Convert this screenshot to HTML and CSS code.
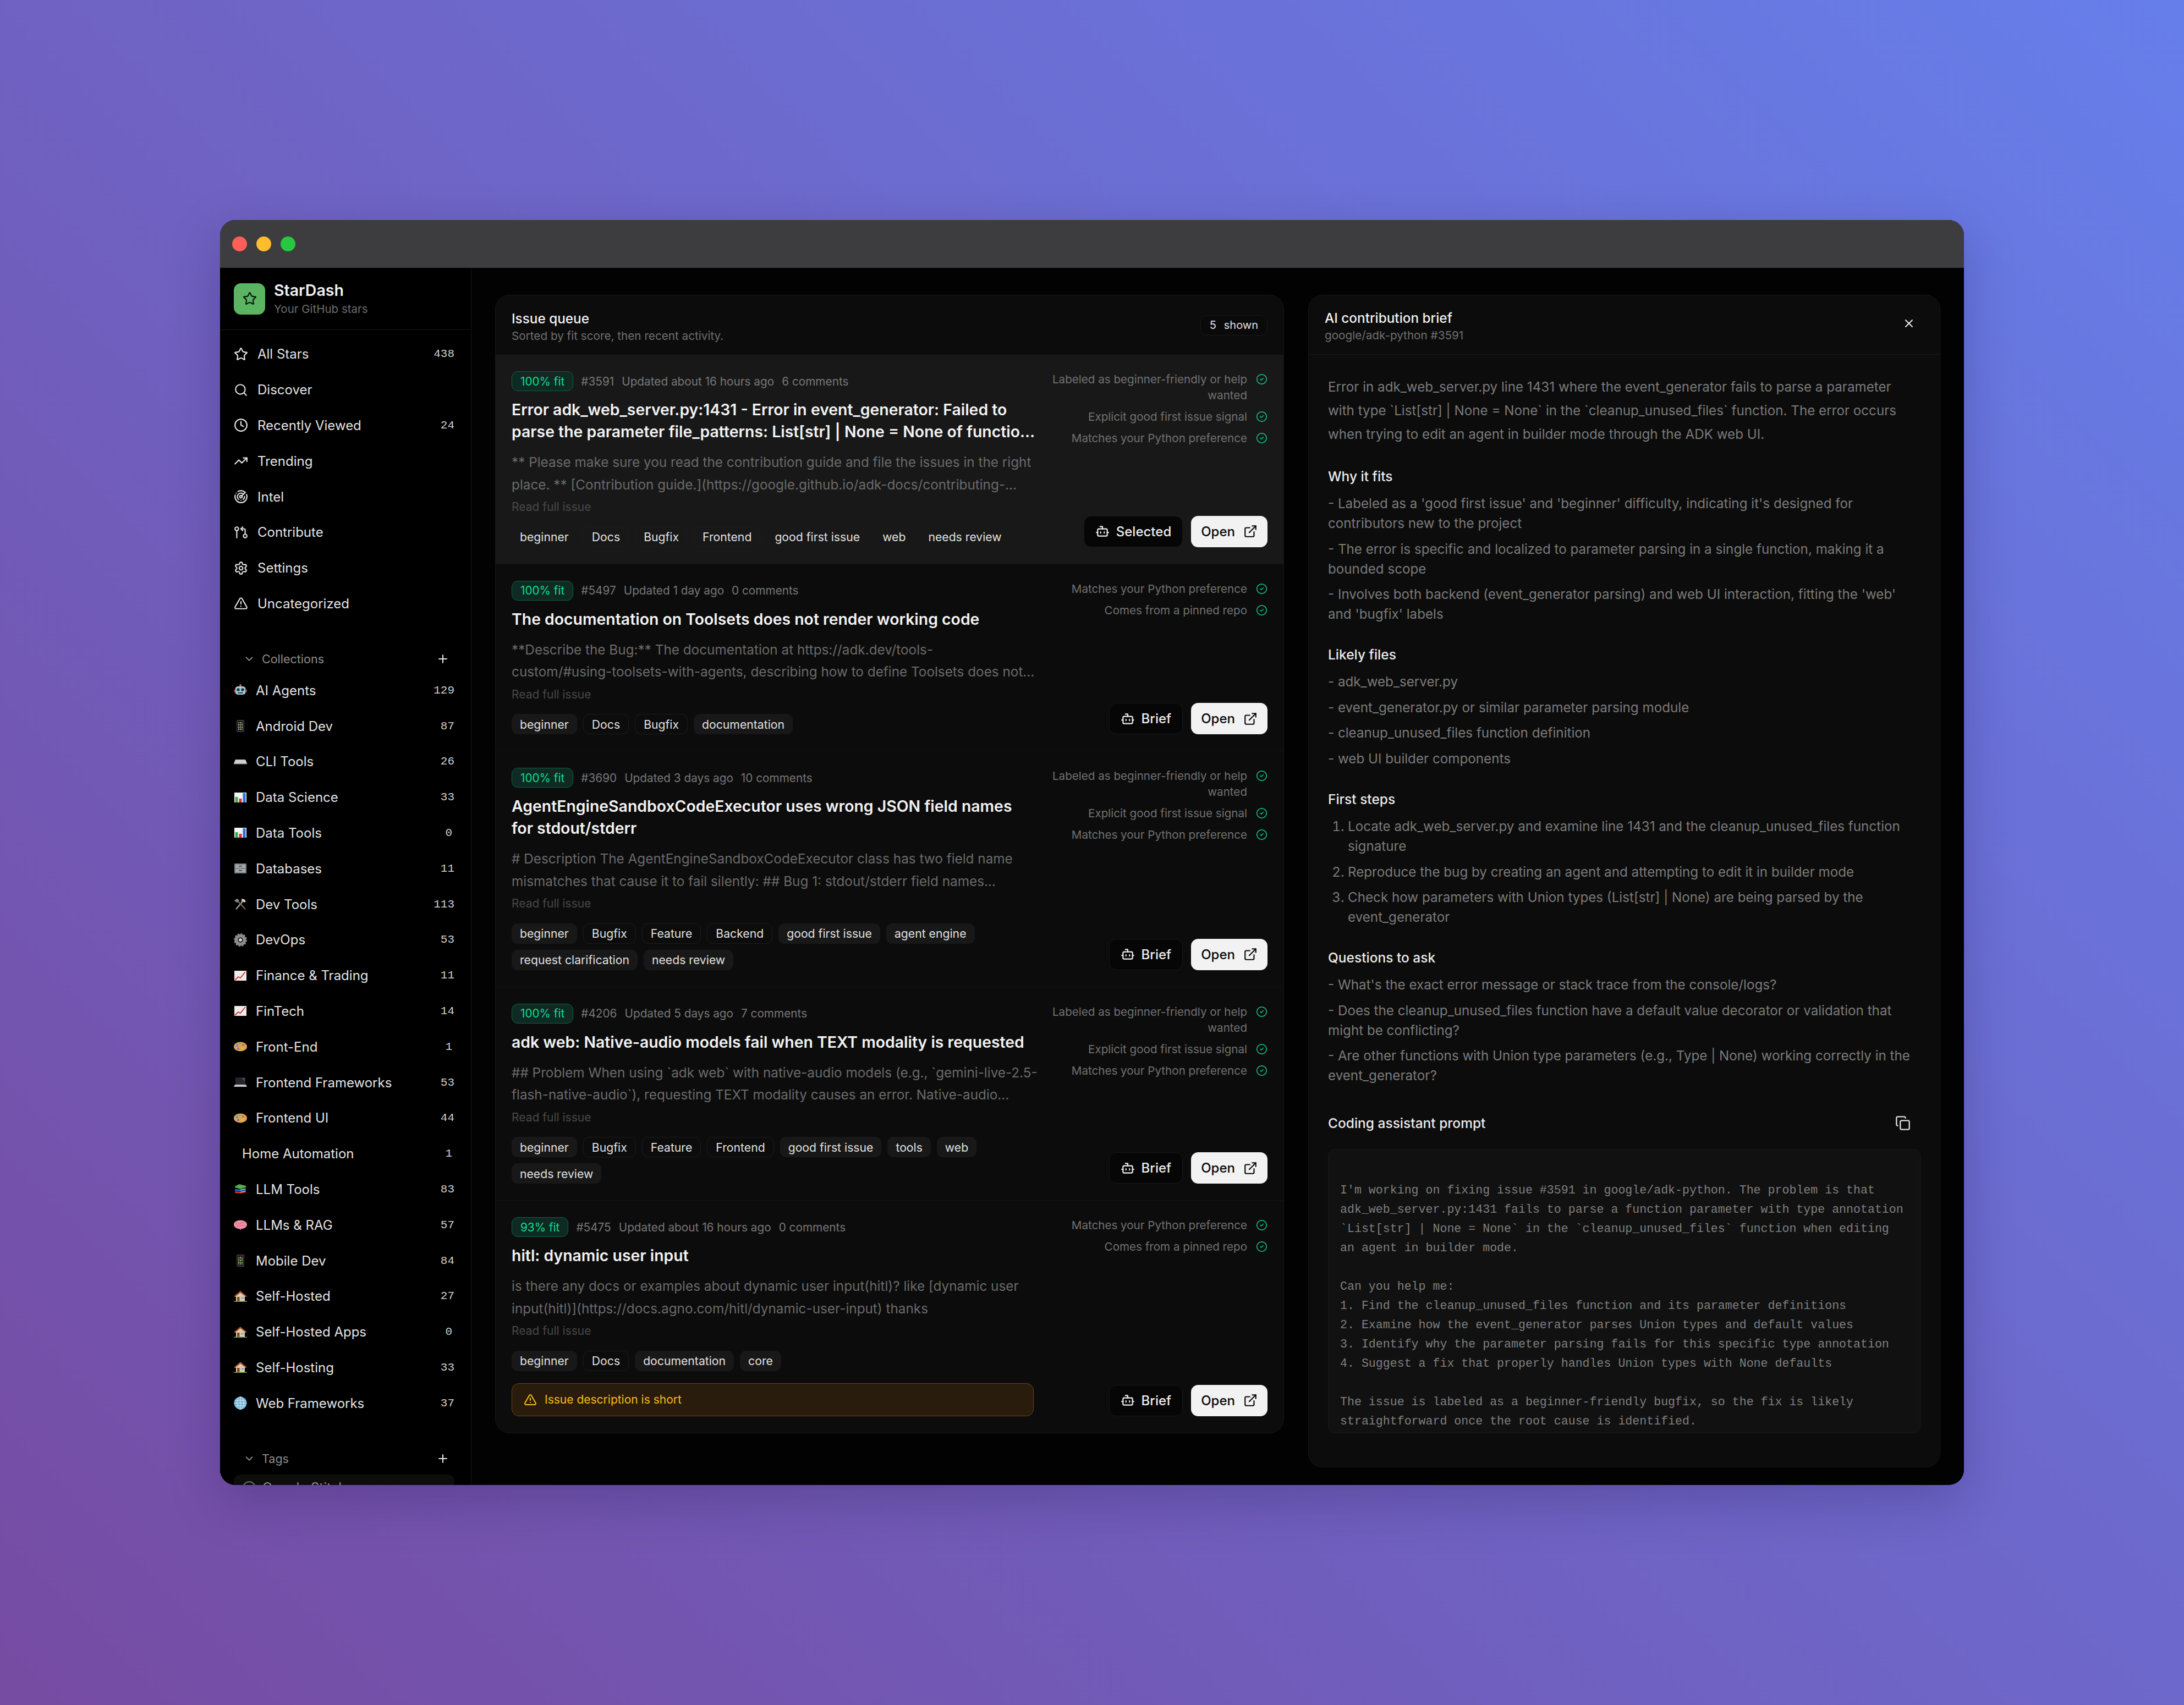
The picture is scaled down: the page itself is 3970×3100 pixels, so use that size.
FILE: index.html
```html
<!DOCTYPE html>
<html lang="en">
<head>
  <meta charset="UTF-8">
  <title>StarDash</title>
  <link rel="stylesheet" href="styles.css">
</head>
<body>
  <!-- icon sprite -->
  <svg class="sprite" xmlns="http://www.w3.org/2000/svg">
    <symbol id="i-star" viewBox="0 0 24 24"><path d="M11.525 2.295a.53.53 0 0 1 .95 0l2.31 4.679a2.123 2.123 0 0 0 1.595 1.16l5.166.756a.53.53 0 0 1 .294.904l-3.736 3.638a2.123 2.123 0 0 0-.611 1.878l.882 5.14a.53.53 0 0 1-.771.56l-4.618-2.428a2.122 2.122 0 0 0-1.973 0L6.396 21.01a.53.53 0 0 1-.77-.56l.881-5.139a2.122 2.122 0 0 0-.611-1.879L2.16 9.795a.53.53 0 0 1 .294-.906l5.165-.755a2.122 2.122 0 0 0 1.597-1.16z"/></symbol>
    <symbol id="i-search" viewBox="0 0 24 24"><circle cx="11" cy="11" r="8"/><path d="m21 21-4.3-4.3"/></symbol>
    <symbol id="i-clock" viewBox="0 0 24 24"><circle cx="12" cy="12" r="10"/><path d="M12 6v6l4 2"/></symbol>
    <symbol id="i-trend" viewBox="0 0 24 24"><path d="M22 7l-8.5 8.5-5-5L2 17"/><path d="M16 7h6v6"/></symbol>
    <symbol id="i-radar" viewBox="0 0 24 24"><path d="M19.07 4.93A10 10 0 0 0 6.99 3.34"/><path d="M4 6h.01"/><path d="M2.29 9.62A10 10 0 1 0 21.31 8.35"/><path d="M16.24 7.76A6 6 0 1 0 8.23 16.67"/><path d="M12 18h.01"/><path d="M17.99 11.66A6 6 0 0 1 15.77 16.67"/><circle cx="12" cy="12" r="2"/><path d="m13.41 10.59 5.66-5.66"/></symbol>
    <symbol id="i-pull" viewBox="0 0 24 24"><circle cx="5" cy="6" r="3"/><path d="M5 9v12"/><circle cx="19" cy="18" r="3"/><path d="m15 9-3-3 3-3"/><path d="M12 6h5a2 2 0 0 1 2 2v7"/></symbol>
    <symbol id="i-gear" viewBox="0 0 24 24"><path d="M12.22 2h-.44a2 2 0 0 0-2 2v.18a2 2 0 0 1-1 1.73l-.43.25a2 2 0 0 1-2 0l-.15-.08a2 2 0 0 0-2.73.73l-.22.38a2 2 0 0 0 .73 2.73l.15.1a2 2 0 0 1 1 1.72v.51a2 2 0 0 1-1 1.74l-.15.09a2 2 0 0 0-.73 2.73l.22.38a2 2 0 0 0 2.73.73l.15-.08a2 2 0 0 1 2 0l.43.25a2 2 0 0 1 1 1.73V20a2 2 0 0 0 2 2h.44a2 2 0 0 0 2-2v-.18a2 2 0 0 1 1-1.73l.43-.25a2 2 0 0 1 2 0l.15.08a2 2 0 0 0 2.73-.73l.22-.39a2 2 0 0 0-.73-2.73l-.15-.08a2 2 0 0 1-1-1.74v-.5a2 2 0 0 1 1-1.74l.15-.09a2 2 0 0 0 .73-2.73l-.22-.38a2 2 0 0 0-2.73-.73l-.15.08a2 2 0 0 1-2 0l-.43-.25a2 2 0 0 1-1-1.73V4a2 2 0 0 0-2-2z"/><circle cx="12" cy="12" r="3"/></symbol>
    <symbol id="i-alert" viewBox="0 0 24 24"><path d="m21.73 18-8-14a2 2 0 0 0-3.48 0l-8 14A2 2 0 0 0 4 21h16a2 2 0 0 0 1.73-3"/><path d="M12 9v4"/><path d="M12 17h.01"/></symbol>
    <symbol id="i-chevron" viewBox="0 0 24 24"><path d="m6 9 6 6 6-6"/></symbol>
    <symbol id="i-plus" viewBox="0 0 24 24"><path d="M5 12h14"/><path d="M12 5v14"/></symbol>
    <symbol id="i-close" viewBox="0 0 24 24"><path d="M18 6 6 18"/><path d="m6 6 12 12"/></symbol>
    <symbol id="i-bot" viewBox="0 0 24 24"><path d="M12 8V4H8"/><rect width="16" height="12" x="4" y="8" rx="2"/><path d="M2 14h2"/><path d="M20 14h2"/><path d="M15 13v2"/><path d="M9 13v2"/></symbol>
    <symbol id="i-link" viewBox="0 0 24 24"><path d="M15 3h6v6"/><path d="M10 14 21 3"/><path d="M18 13v6a2 2 0 0 1-2 2H5a2 2 0 0 1-2-2V8a2 2 0 0 1 2-2h6"/></symbol>
    <symbol id="i-copy" viewBox="0 0 24 24"><rect width="14" height="14" x="8" y="8" rx="2"/><path d="M4 16c-1.1 0-2-.9-2-2V4c0-1.1.9-2 2-2h10c1.1 0 2 .9 2 2"/></symbol>
    <symbol id="i-check" viewBox="0 0 24 24"><circle cx="12" cy="12" r="10"/><path d="m9 12 2 2 4-4"/></symbol>
    <symbol id="i-ring" viewBox="0 0 24 24"><circle cx="12" cy="12" r="10"/></symbol>

    <!-- collection emoji, drawn small -->
    <symbol id="e-robot" viewBox="0 0 24 24"><circle cx="12" cy="3" r="2" fill="#e2574c"/><rect x="11.3" y="3" width="1.4" height="3" fill="#9aa7ad"/><rect x="2.5" y="5" width="19" height="15" rx="5" fill="#9ccfdf"/><rect x="0" y="11" width="3" height="4.5" rx="1" fill="#c0392b"/><rect x="21" y="11" width="3" height="4.5" rx="1" fill="#c0392b"/><circle cx="8" cy="11" r="2.8" fill="#24343c"/><circle cx="16" cy="11" r="2.8" fill="#24343c"/><rect x="7" y="15.5" width="10" height="2.6" rx="1" fill="#3d5561"/></symbol>
    <symbol id="e-phone" viewBox="0 0 24 24"><rect x="5" y="1" width="14" height="22" rx="2" fill="#3a3d42"/><rect x="6.5" y="3" width="11" height="18" fill="#111"/><path d="M8 5h2v2H8zM14 5h2v2h-2z" fill="#e2574c"/><path d="M11 8h2v2h-2zM8 11h2v2H8z" fill="#4ba3e3"/><path d="M14 11h2v2h-2zM11 14h2v2h-2z" fill="#5cb85c"/><path d="M8 17h2v2H8zM14 17h2v2h-2z" fill="#c586e8"/><path d="M11 5h2v2h-2zM8 8h2v2H8zM14 8h2v2h-2zM11 11h2v2h-2zM8 14h2v2H8zM14 14h2v2h-2zM11 17h2v2h-2z" fill="#d8c24a"/></symbol>
    <symbol id="e-keyboard" viewBox="0 0 24 24"><path d="M3 8h18l3 7H0z" fill="#d6d6d6"/><path d="M0 15h24v1.5H0z" fill="#8f8f8f"/><path d="M4 10h16M3 12h18" stroke="#a8a8a8" stroke-width=".8" stroke-dasharray="1 .6"/></symbol>
    <symbol id="e-bars" viewBox="0 0 24 24"><rect x="1" y="3" width="22" height="18" fill="#f4f4f4"/><rect x="2.5" y="11" width="5" height="10" fill="#3cab4a"/><rect x="9.5" y="14" width="5" height="7" fill="#d9342b"/><rect x="16.5" y="4" width="5" height="17" fill="#2a6fd6"/></symbol>
    <symbol id="e-cabinet" viewBox="0 0 24 24"><rect x="1" y="3" width="22" height="18" rx="1" fill="#7b8084"/><rect x="3" y="5" width="18" height="6" fill="#a5a9ac"/><rect x="3" y="13" width="18" height="6" fill="#a5a9ac"/><rect x="9" y="7" width="6" height="1.6" fill="#3c3f42"/><rect x="9" y="15" width="6" height="1.6" fill="#3c3f42"/></symbol>
    <symbol id="e-tools" viewBox="0 0 24 24"><path d="M4 21 18 5" stroke="#a3a3a3" stroke-width="2.4"/><path d="M15 2l4 1 3 4-3 2-3-3-3 1z" fill="#d0d0d0"/><path d="M21 21 7 6" stroke="#7a6650" stroke-width="2.4"/><path d="M1 5l5-3 4 3-4 4-2-1z" fill="#8a8a8a"/></symbol>
    <symbol id="e-gear" viewBox="0 0 24 24"><circle cx="12" cy="12" r="7.5" fill="none" stroke="#8b8b8b" stroke-width="6"/><circle cx="12" cy="12" r="10.5" fill="none" stroke="#8b8b8b" stroke-width="3" stroke-dasharray="3 2.5"/><circle cx="12" cy="12" r="3" fill="#d4d4d4"/></symbol>
    <symbol id="e-chart" viewBox="0 0 24 24"><rect x="1" y="3" width="22" height="18" fill="#ececec"/><path d="M2 20l6-6 4 2 9-11" fill="none" stroke="#d32f2f" stroke-width="1.8"/></symbol>
    <symbol id="e-palette" viewBox="0 0 24 24"><ellipse cx="12" cy="12" rx="12" ry="8.5" fill="#d8a657"/><circle cx="6" cy="10" r="2" fill="#3d8fd1"/><circle cx="11" cy="7" r="1.8" fill="#5cb85c"/><circle cx="17" cy="9" r="2" fill="#e2574c"/><circle cx="8" cy="15.5" r="2" fill="#9b59b6"/><circle cx="15" cy="15" r="1.8" fill="#f1c40f"/></symbol>
    <symbol id="e-laptop" viewBox="0 0 24 24"><rect x="3" y="3" width="18" height="13" rx="1" fill="#23262a"/><path d="M14 4h6v7z" fill="#43484e"/><path d="M2 16h20l2 4H0z" fill="#c4c6c9"/></symbol>
    <symbol id="e-books" viewBox="0 0 24 24"><path d="M2 7 10 3l12 3v3l-10 3L2 9z" fill="#4caf50"/><path d="M2 12l10 1 10-2v3l-10 2-10-1z" fill="#2a6fd6"/><path d="M2 16l10 1 10-2v3l-10 2-10-1z" fill="#d9342b"/><path d="M12 17l9-2v1l-9 2zM12 13l9-2v1l-9 2z" fill="#eee"/></symbol>
    <symbol id="e-brain" viewBox="0 0 24 24"><ellipse cx="12" cy="11.5" rx="12" ry="8" fill="#f08fa5"/><path d="M12 19v2" stroke="#c96b82" stroke-width="2"/><path d="M3 11c3-3 5 1 8-1s5-4 8-2M5 15c3-2 5 0 7-1s5 0 7-2" fill="none" stroke="#c96b82" stroke-width="1.1"/></symbol>
    <symbol id="e-house" viewBox="0 0 24 24"><rect x="4" y="10" width="16" height="11" fill="#e8c9a0"/><path d="M0 12 12 2l12 10-2 1L12 5 2 13z" fill="#a5512f"/><path d="M12 5 21 12.5V13H3v-.5z" fill="#e8c9a0"/><rect x="6" y="13" width="4.5" height="8" fill="#7a4a2a"/><rect x="13" y="13" width="5.5" height="4" fill="#7fb8e6"/><rect x="0" y="20.5" width="24" height="1.5" fill="#6e9e5a"/></symbol>
    <symbol id="e-globe" viewBox="0 0 24 24"><circle cx="12" cy="12" r="11.5" fill="#76b4d8"/><path d="M.5 12h23M2 7h20M2 17h20M12 .5v23" stroke="#d6ebf5" stroke-width="1"/><ellipse cx="12" cy="12" rx="6" ry="11.5" fill="none" stroke="#d6ebf5"/></symbol>
  </svg>

  <div class="window">
    <div class="titlebar">
      <span class="dot red"></span>
      <span class="dot yellow"></span>
      <span class="dot green"></span>
    </div>

    <div class="app">
      <aside class="sidebar">
        <div class="brand">
          <div class="logo"><svg class="icon logo-star"><use href="#i-star"/></svg></div>
          <div>
            <div class="brand-name">StarDash</div>
            <div class="brand-sub">Your GitHub stars</div>
          </div>
        </div>

        <nav class="nav">
          <a class="item"><svg class="icon"><use href="#i-star"/></svg><span class="item-name">All Stars</span><span class="count">438</span></a>
          <a class="item"><svg class="icon"><use href="#i-search"/></svg><span class="item-name">Discover</span></a>
          <a class="item"><svg class="icon"><use href="#i-clock"/></svg><span class="item-name">Recently Viewed</span><span class="count">24</span></a>
          <a class="item"><svg class="icon"><use href="#i-trend"/></svg><span class="item-name">Trending</span></a>
          <a class="item"><svg class="icon"><use href="#i-radar"/></svg><span class="item-name">Intel</span></a>
          <a class="item"><svg class="icon"><use href="#i-pull"/></svg><span class="item-name">Contribute</span></a>
          <a class="item"><svg class="icon"><use href="#i-gear"/></svg><span class="item-name">Settings</span></a>
          <a class="item"><svg class="icon"><use href="#i-alert"/></svg><span class="item-name">Uncategorized</span></a>
        </nav>

        <div class="section-head">
          <svg class="icon chevron"><use href="#i-chevron"/></svg>
          <span class="section-name">Collections</span>
          <svg class="icon plus"><use href="#i-plus"/></svg>
        </div>

        <div class="collections">
          <a class="item"><svg class="emoji"><use href="#e-robot"/></svg><span class="item-name">AI Agents</span><span class="count">129</span></a>
          <a class="item"><svg class="emoji"><use href="#e-phone"/></svg><span class="item-name">Android Dev</span><span class="count">87</span></a>
          <a class="item"><svg class="emoji"><use href="#e-keyboard"/></svg><span class="item-name">CLI Tools</span><span class="count">26</span></a>
          <a class="item"><svg class="emoji"><use href="#e-bars"/></svg><span class="item-name">Data Science</span><span class="count">33</span></a>
          <a class="item"><svg class="emoji"><use href="#e-bars"/></svg><span class="item-name">Data Tools</span><span class="count single">0</span></a>
          <a class="item"><svg class="emoji"><use href="#e-cabinet"/></svg><span class="item-name">Databases</span><span class="count">11</span></a>
          <a class="item"><svg class="emoji"><use href="#e-tools"/></svg><span class="item-name">Dev Tools</span><span class="count">113</span></a>
          <a class="item"><svg class="emoji"><use href="#e-gear"/></svg><span class="item-name">DevOps</span><span class="count">53</span></a>
          <a class="item"><svg class="emoji"><use href="#e-chart"/></svg><span class="item-name">Finance &amp; Trading</span><span class="count">11</span></a>
          <a class="item"><svg class="emoji"><use href="#e-chart"/></svg><span class="item-name">FinTech</span><span class="count">14</span></a>
          <a class="item"><svg class="emoji"><use href="#e-palette"/></svg><span class="item-name">Front-End</span><span class="count single">1</span></a>
          <a class="item"><svg class="emoji"><use href="#e-laptop"/></svg><span class="item-name">Frontend Frameworks</span><span class="count">53</span></a>
          <a class="item"><svg class="emoji"><use href="#e-palette"/></svg><span class="item-name">Frontend UI</span><span class="count">44</span></a>
          <a class="item no-emoji"><span class="item-name">Home Automation</span><span class="count single">1</span></a>
          <a class="item"><svg class="emoji"><use href="#e-books"/></svg><span class="item-name">LLM Tools</span><span class="count">83</span></a>
          <a class="item"><svg class="emoji"><use href="#e-brain"/></svg><span class="item-name">LLMs &amp; RAG</span><span class="count">57</span></a>
          <a class="item"><svg class="emoji"><use href="#e-phone"/></svg><span class="item-name">Mobile Dev</span><span class="count">84</span></a>
          <a class="item"><svg class="emoji"><use href="#e-house"/></svg><span class="item-name">Self-Hosted</span><span class="count">27</span></a>
          <a class="item"><svg class="emoji"><use href="#e-house"/></svg><span class="item-name">Self-Hosted Apps</span><span class="count single">0</span></a>
          <a class="item"><svg class="emoji"><use href="#e-house"/></svg><span class="item-name">Self-Hosting</span><span class="count">33</span></a>
          <a class="item"><svg class="emoji"><use href="#e-globe"/></svg><span class="item-name">Web Frameworks</span><span class="count">37</span></a>
        </div>

        <div class="section-head">
          <svg class="icon chevron"><use href="#i-chevron"/></svg>
          <span class="section-name">Tags</span>
          <svg class="icon plus"><use href="#i-plus"/></svg>
        </div>
        <div class="tag-filter">
          <svg class="icon"><use href="#i-ring"/></svg>
          <span>Google Stitch</span>
        </div>
      </aside>

      <main class="main">
        <section class="panel queue">
          <header class="panel-head">
            <div class="panel-titles">
              <div class="panel-title">Issue queue</div>
              <div class="panel-sub">Sorted by fit score, then recent activity.</div>
            </div>
            <div class="shown"><span>5</span><span>shown</span></div>
          </header>

          <article class="issue selected">
            <div class="issue-left">
              <div class="issue-meta"><span class="fit">100% fit</span><span>#3591</span><span>Updated about 16 hours ago</span><span>6 comments</span></div>
              <h3 class="issue-title">Error adk_web_server.py:1431 - Error in event_generator: Failed to<br>parse the parameter file_patterns: List[str] | None = None of functio…</h3>
              <p class="issue-body">** Please make sure you read the contribution guide and file the issues in the right<br>place. ** [Contribution guide.](https://google.github.io/adk-docs/contributing-…</p>
              <div class="read-more">Read full issue</div>
              <div class="tags">
                <span class="tag">beginner</span><span class="tag outline">Docs</span><span class="tag outline">Bugfix</span><span class="tag outline">Frontend</span><span class="tag">good first issue</span><span class="tag">web</span><span class="tag">needs review</span>
              </div>
            </div>
            <div class="issue-right">
              <ul class="reasons">
                <li><span>Labeled as beginner-friendly or help wanted</span><svg class="icon check"><use href="#i-check"/></svg></li>
                <li><span>Explicit good first issue signal</span><svg class="icon check"><use href="#i-check"/></svg></li>
                <li><span>Matches your Python preference</span><svg class="icon check"><use href="#i-check"/></svg></li>
              </ul>
              <div class="actions">
                <a class="btn"><svg class="icon"><use href="#i-bot"/></svg>Selected</a>
                <a class="btn primary">Open<svg class="icon"><use href="#i-link"/></svg></a>
              </div>
            </div>
          </article>

          <article class="issue">
            <div class="issue-left">
              <div class="issue-meta"><span class="fit">100% fit</span><span>#5497</span><span>Updated 1 day ago</span><span>0 comments</span></div>
              <h3 class="issue-title">The documentation on Toolsets does not render working code</h3>
              <p class="issue-body">**Describe the Bug:** The documentation at https://adk.dev/tools-<br>custom/#using-toolsets-with-agents, describing how to define Toolsets does not…</p>
              <div class="read-more">Read full issue</div>
              <div class="tags">
                <span class="tag">beginner</span><span class="tag outline">Docs</span><span class="tag outline">Bugfix</span><span class="tag">documentation</span>
              </div>
            </div>
            <div class="issue-right">
              <ul class="reasons">
                <li><span>Matches your Python preference</span><svg class="icon check"><use href="#i-check"/></svg></li>
                <li><span>Comes from a pinned repo</span><svg class="icon check"><use href="#i-check"/></svg></li>
              </ul>
              <div class="actions">
                <a class="btn"><svg class="icon"><use href="#i-bot"/></svg>Brief</a>
                <a class="btn primary">Open<svg class="icon"><use href="#i-link"/></svg></a>
              </div>
            </div>
          </article>

          <article class="issue">
            <div class="issue-left">
              <div class="issue-meta"><span class="fit">100% fit</span><span>#3690</span><span>Updated 3 days ago</span><span>10 comments</span></div>
              <h3 class="issue-title">AgentEngineSandboxCodeExecutor uses wrong JSON field names<br>for stdout/stderr</h3>
              <p class="issue-body"># Description The AgentEngineSandboxCodeExecutor class has two field name<br>mismatches that cause it to fail silently: ## Bug 1: stdout/stderr field names…</p>
              <div class="read-more">Read full issue</div>
              <div class="tags">
                <span class="tag">beginner</span><span class="tag outline">Bugfix</span><span class="tag outline">Feature</span><span class="tag outline">Backend</span><span class="tag">good first issue</span><span class="tag">agent engine</span><span class="tag">request clarification</span><span class="tag">needs review</span>
              </div>
            </div>
            <div class="issue-right">
              <ul class="reasons">
                <li><span>Labeled as beginner-friendly or help wanted</span><svg class="icon check"><use href="#i-check"/></svg></li>
                <li><span>Explicit good first issue signal</span><svg class="icon check"><use href="#i-check"/></svg></li>
                <li><span>Matches your Python preference</span><svg class="icon check"><use href="#i-check"/></svg></li>
              </ul>
              <div class="actions">
                <a class="btn"><svg class="icon"><use href="#i-bot"/></svg>Brief</a>
                <a class="btn primary">Open<svg class="icon"><use href="#i-link"/></svg></a>
              </div>
            </div>
          </article>

          <article class="issue">
            <div class="issue-left">
              <div class="issue-meta"><span class="fit">100% fit</span><span>#4206</span><span>Updated 5 days ago</span><span>7 comments</span></div>
              <h3 class="issue-title">adk web: Native-audio models fail when TEXT modality is requested</h3>
              <p class="issue-body">## Problem When using `adk web` with native-audio models (e.g., `gemini-live-2.5-<br>flash-native-audio`), requesting TEXT modality causes an error. Native-audio…</p>
              <div class="read-more">Read full issue</div>
              <div class="tags">
                <span class="tag">beginner</span><span class="tag outline">Bugfix</span><span class="tag outline">Feature</span><span class="tag outline">Frontend</span><span class="tag">good first issue</span><span class="tag">tools</span><span class="tag">web</span><span class="tag">needs review</span>
              </div>
            </div>
            <div class="issue-right">
              <ul class="reasons">
                <li><span>Labeled as beginner-friendly or help wanted</span><svg class="icon check"><use href="#i-check"/></svg></li>
                <li><span>Explicit good first issue signal</span><svg class="icon check"><use href="#i-check"/></svg></li>
                <li><span>Matches your Python preference</span><svg class="icon check"><use href="#i-check"/></svg></li>
              </ul>
              <div class="actions">
                <a class="btn"><svg class="icon"><use href="#i-bot"/></svg>Brief</a>
                <a class="btn primary">Open<svg class="icon"><use href="#i-link"/></svg></a>
              </div>
            </div>
          </article>

          <article class="issue last">
            <div class="issue-left">
              <div class="issue-meta"><span class="fit">93% fit</span><span>#5475</span><span>Updated about 16 hours ago</span><span>0 comments</span></div>
              <h3 class="issue-title">hitl: dynamic user input</h3>
              <p class="issue-body">is there any docs or examples about dynamic user input(hitl)? like [dynamic user<br>input(hitl)](https://docs.agno.com/hitl/dynamic-user-input) thanks</p>
              <div class="read-more">Read full issue</div>
              <div class="tags">
                <span class="tag">beginner</span><span class="tag outline">Docs</span><span class="tag">documentation</span><span class="tag">core</span>
              </div>
              <div class="warning"><svg class="icon"><use href="#i-alert"/></svg>Issue description is short</div>
            </div>
            <div class="issue-right">
              <ul class="reasons">
                <li><span>Matches your Python preference</span><svg class="icon check"><use href="#i-check"/></svg></li>
                <li><span>Comes from a pinned repo</span><svg class="icon check"><use href="#i-check"/></svg></li>
              </ul>
              <div class="actions">
                <a class="btn"><svg class="icon"><use href="#i-bot"/></svg>Brief</a>
                <a class="btn primary">Open<svg class="icon"><use href="#i-link"/></svg></a>
              </div>
            </div>
          </article>
        </section>

        <section class="panel brief">
          <header class="panel-head ruled">
            <div class="panel-titles">
              <div class="panel-title">AI contribution brief</div>
              <div class="panel-sub">google/adk-python #3591</div>
            </div>
            <svg class="icon close"><use href="#i-close"/></svg>
          </header>

          <div class="brief-body">
            <p class="summary">Error in adk_web_server.py line 1431 where the event_generator fails to parse a parameter with type `List[str] | None = None` in the `cleanup_unused_files` function. The error occurs when trying to edit an agent in builder mode through the ADK web UI.</p>

            <h4>Why it fits</h4>
            <ul class="points">
              <li>- Labeled as a 'good first issue' and 'beginner' difficulty, indicating it's designed for contributors new to the project</li>
              <li>- The error is specific and localized to parameter parsing in a single function, making it a bounded scope</li>
              <li>- Involves both backend (event_generator parsing) and web UI interaction, fitting the 'web' and 'bugfix' labels</li>
            </ul>

            <h4>Likely files</h4>
            <ul class="points">
              <li>- adk_web_server.py</li>
              <li>- event_generator.py or similar parameter parsing module</li>
              <li>- cleanup_unused_files function definition</li>
              <li>- web UI builder components</li>
            </ul>

            <h4>First steps</h4>
            <ol class="points steps">
              <li>Locate adk_web_server.py and examine line 1431 and the cleanup_unused_files function signature</li>
              <li>Reproduce the bug by creating an agent and attempting to edit it in builder mode</li>
              <li>Check how parameters with Union types (List[str] | None) are being parsed by the event_generator</li>
            </ol>

            <h4>Questions to ask</h4>
            <ul class="points">
              <li>- What's the exact error message or stack trace from the console/logs?</li>
              <li>- Does the cleanup_unused_files function have a default value decorator or validation that might be conflicting?</li>
              <li>- Are other functions with Union type parameters (e.g., Type | None) working correctly in the event_generator?</li>
            </ul>

            <div class="prompt-head">
              <h4>Coding assistant prompt</h4>
              <svg class="icon copy"><use href="#i-copy"/></svg>
            </div>
<pre class="prompt">I'm working on fixing issue #3591 in google/adk-python. The problem is that
adk_web_server.py:1431 fails to parse a function parameter with type annotation
`List[str] | None = None` in the `cleanup_unused_files` function when editing
an agent in builder mode.

Can you help me:
1. Find the cleanup_unused_files function and its parameter definitions
2. Examine how the event_generator parses Union types and default values
3. Identify why the parameter parsing fails for this specific type annotation
4. Suggest a fix that properly handles Union types with None defaults

The issue is labeled as a beginner-friendly bugfix, so the fix is likely
straightforward once the root cause is identified.</pre>
          </div>
        </section>
      </main>
    </div>
  </div>
</body>
</html>
```

FILE: styles.css
```css
* {
  box-sizing: border-box;
}
body {
  margin: 0;
  width: 3970px;
  height: 3100px;
  padding: 400px 0 0 400px;
  overflow: hidden;
  font-family: Inter, "Liberation Sans", sans-serif;
  color: #e4e4e4;
  background: linear-gradient(225deg, #667eea 0%, #764ba2 100%);
}
.sprite {
  display: none;
}
.icon {
  width: 26px;
  height: 26px;
  flex: none;
  fill: none;
  stroke: currentColor;
  stroke-width: 2;
  stroke-linecap: round;
  stroke-linejoin: round;
}

/* window */
.window {
  width: 3170px;
  height: 2300px;
  display: flex;
  flex-direction: column;
  border-radius: 28px;
  overflow: hidden;
  background: #000;
  box-shadow: 0 30px 90px rgba(30, 20, 70, 0.25);
}
.titlebar {
  height: 87px;
  flex: none;
  display: flex;
  align-items: center;
  gap: 17px;
  padding-left: 22px;
  background: #3d3d3f;
}
.dot {
  width: 27px;
  height: 27px;
  border-radius: 50%;
}
.dot.red { background: #ff5f57; }
.dot.yellow { background: #febc2e; }
.dot.green { background: #28c840; }
.app {
  flex: 1;
  min-height: 0;
  display: flex;
  background: #020202;
}

/* sidebar */
.sidebar {
  width: 457px;
  flex: none;
  overflow: hidden;
  background: #000;
  border-right: 1px solid #141414;
}
.brand {
  height: 113px;
  display: flex;
  align-items: center;
  gap: 16px;
  padding: 0 25px;
  border-bottom: 1px solid #181818;
}
.logo {
  width: 57px;
  height: 57px;
  display: flex;
  align-items: center;
  justify-content: center;
  border-radius: 13px;
  background: #5bb462;
  color: #07150a;
}
.brand-name {
  font-size: 28.5px;
  line-height: 34px;
  font-weight: 600;
  color: #f0f0f0;
}
.brand-sub {
  font-size: 20.5px;
  line-height: 28px;
  margin-top: 3px;
  color: #6d6d6d;
}
.nav {
  padding-top: 11.5px;
}
.item {
  height: 64.8px;
  display: flex;
  align-items: center;
  padding: 0 30px 0 25px;
  font-size: 24px;
  color: #e2e2e2;
}
.nav .item .icon {
  margin-right: 17px;
}
.emoji {
  width: 24px;
  height: 24px;
  flex: none;
  margin-right: 16px;
}
.item.no-emoji {
  padding-left: 40px;
}
.item-name {
  flex: 1;
  white-space: nowrap;
}
.count {
  font-family: "Liberation Mono", monospace;
  font-size: 21px;
  color: #cfcfcf;
}
.count.single {
  margin-right: 4px;
}
.section-head {
  height: 50px;
  margin-top: 43px;
  display: flex;
  align-items: center;
  padding: 0 39px 0 42px;
  font-size: 21.5px;
  color: #8c8c8c;
}
.chevron {
  width: 22px;
  height: 22px;
  margin-right: 12px;
}
.section-name {
  flex: 1;
}
.plus {
  width: 24px;
  height: 24px;
  color: #e8e8e8;
}
.tag-filter {
  height: 48px;
  margin: 4px 30px 0 25px;
  padding: 0 15px;
  display: flex;
  align-items: center;
  gap: 11px;
  border-radius: 12px;
  background: #0d0d0d;
  font-size: 24px;
  color: #8a8a8a;
}
.tag-filter .icon {
  color: #666;
}

/* panels */
.main {
  flex: 1;
  min-width: 0;
  display: flex;
  align-items: flex-start;
  gap: 44px;
  padding: 49px 0 0 43px;
}
.panel {
  flex: none;
  border: 1px solid #161616;
  border-radius: 26px;
  background: #0c0c0c;
  overflow: hidden;
}
.queue {
  width: 1434px;
}
.brief {
  width: 1149px;
  padding-bottom: 61px;
}
.panel-head {
  height: 108px;
  display: flex;
  align-items: center;
  justify-content: space-between;
  padding: 0 29px;
}
.panel-head.ruled {
  border-bottom: 1px solid #181818;
}
.panel-titles {
  padding-top: 7px;
}
.panel-title {
  font-size: 24.3px;
  line-height: 32px;
  font-weight: 450;
  color: #f0f0f0;
}
.panel-sub {
  font-size: 20.7px;
  line-height: 32px;
  color: #6f6f6f;
}
.shown {
  height: 37px;
  display: flex;
  align-items: center;
  gap: 14px;
  padding: 0 16px;
  border: 1px solid #1a1a1a;
  border-radius: 12px;
  background: #0a0a0a;
  font-size: 20px;
  color: #e0e0e0;
}
.close {
  width: 24px;
  height: 24px;
  margin: 0 15px 6px 0;
  color: #f0f0f0;
}

/* issue rows */
.issue {
  display: grid;
  grid-template-columns: 1fr 400px;
  gap: 25px;
  padding: 30px 29px;
  border-bottom: 1px solid #141414;
}
.issue.selected {
  background: #181818;
}
.issue.last {
  border-bottom: none;
}
.issue-left {
  min-width: 0;
}
.issue-meta {
  display: flex;
  align-items: center;
  gap: 14px;
  font-size: 20.75px;
  color: #777;
}
.fit {
  height: 36px;
  display: flex;
  align-items: center;
  padding: 0 15px;
  border: 1px solid #0f5f47;
  border-radius: 11px;
  background: #0e2a22;
  color: #10dc92;
}
/* line breaks in titles and bodies are set by hand */
.issue-title {
  margin: 14px 0 15px;
  font-size: 28.4px;
  line-height: 40px;
  font-weight: 600;
  white-space: nowrap;
  color: #f2f2f2;
}
.issue-body {
  margin: 0;
  font-size: 24.3px;
  line-height: 40.5px;
  white-space: nowrap;
  color: #6a6a6a;
}
.read-more {
  margin-top: 6px;
  font-size: 21px;
  line-height: 29px;
  color: #484848;
}
.tags {
  display: flex;
  flex-wrap: wrap;
  gap: 11px;
  margin-top: 21.5px;
}
.tag {
  height: 37px;
  display: flex;
  align-items: center;
  padding: 0 15px;
  border-radius: 11px;
  background: #181818;
  font-size: 21.2px;
  color: #e0e0e0;
}
.tag.outline {
  border: 1px solid #1c1c1c;
  background: transparent;
}
.warning {
  height: 60px;
  margin-top: 22px;
  display: flex;
  align-items: center;
  gap: 14px;
  padding: 0 21px;
  border: 1px solid #6a4410;
  border-radius: 13px;
  background: #2a1c0c;
  font-size: 21px;
  color: #f5bc14;
}
.warning .icon {
  width: 24px;
  height: 24px;
}
.issue-right {
  display: flex;
  flex-direction: column;
  justify-content: space-between;
}
.reasons {
  margin: 0;
  padding: 0;
  list-style: none;
  display: flex;
  flex-direction: column;
  gap: 10px;
}
.reasons li {
  display: flex;
  justify-content: flex-end;
  gap: 16px;
  text-align: right;
  font-size: 20.6px;
  line-height: 29px;
  color: #717171;
}
.check {
  width: 21px;
  height: 21px;
  margin-top: 4px;
  color: #0fb87f;
}
.actions {
  display: flex;
  justify-content: flex-end;
  gap: 15px;
}
.btn {
  height: 57px;
  display: flex;
  align-items: center;
  gap: 12px;
  padding: 0 20px;
  border: 1px solid #181818;
  border-radius: 13px;
  background: #060606;
  font-size: 24px;
  font-weight: 500;
  color: #ececec;
}
.btn.primary {
  gap: 15px;
  padding: 0 18px;
  border: none;
  background: #f2f2f2;
  color: #0a0a0a;
}

/* brief */
.brief-body {
  padding: 37px 35px 0;
}
.summary {
  margin: 0;
  font-size: 24.2px;
  line-height: 43px;
  color: #7a7a7a;
}
.brief-body h4 {
  margin: 39px 0 16px;
  font-size: 24.5px;
  line-height: 32px;
  font-weight: 450;
  color: #eaeaea;
}
.points {
  margin: 0;
  padding: 0;
  list-style: none;
  display: flex;
  flex-direction: column;
  gap: 10.6px;
  font-size: 24.2px;
  line-height: 36px;
  color: #7a7a7a;
}
.points.steps {
  padding-left: 36px;
  list-style: decimal;
}
.prompt-head {
  display: flex;
  align-items: center;
  justify-content: space-between;
  margin-top: 52px;
}
.prompt-head h4 {
  margin: 0;
}
.copy {
  width: 28px;
  height: 28px;
  margin-right: 18px;
  color: #dcdcdc;
}
.prompt {
  margin: 31px 0 0;
  padding: 57px 21px 3px;
  border: 1px solid #191919;
  border-radius: 13px;
  background: #111;
  font-family: "Liberation Mono", monospace;
  font-size: 21.6px;
  line-height: 35px;
  color: #7f7f7f;
}
```
